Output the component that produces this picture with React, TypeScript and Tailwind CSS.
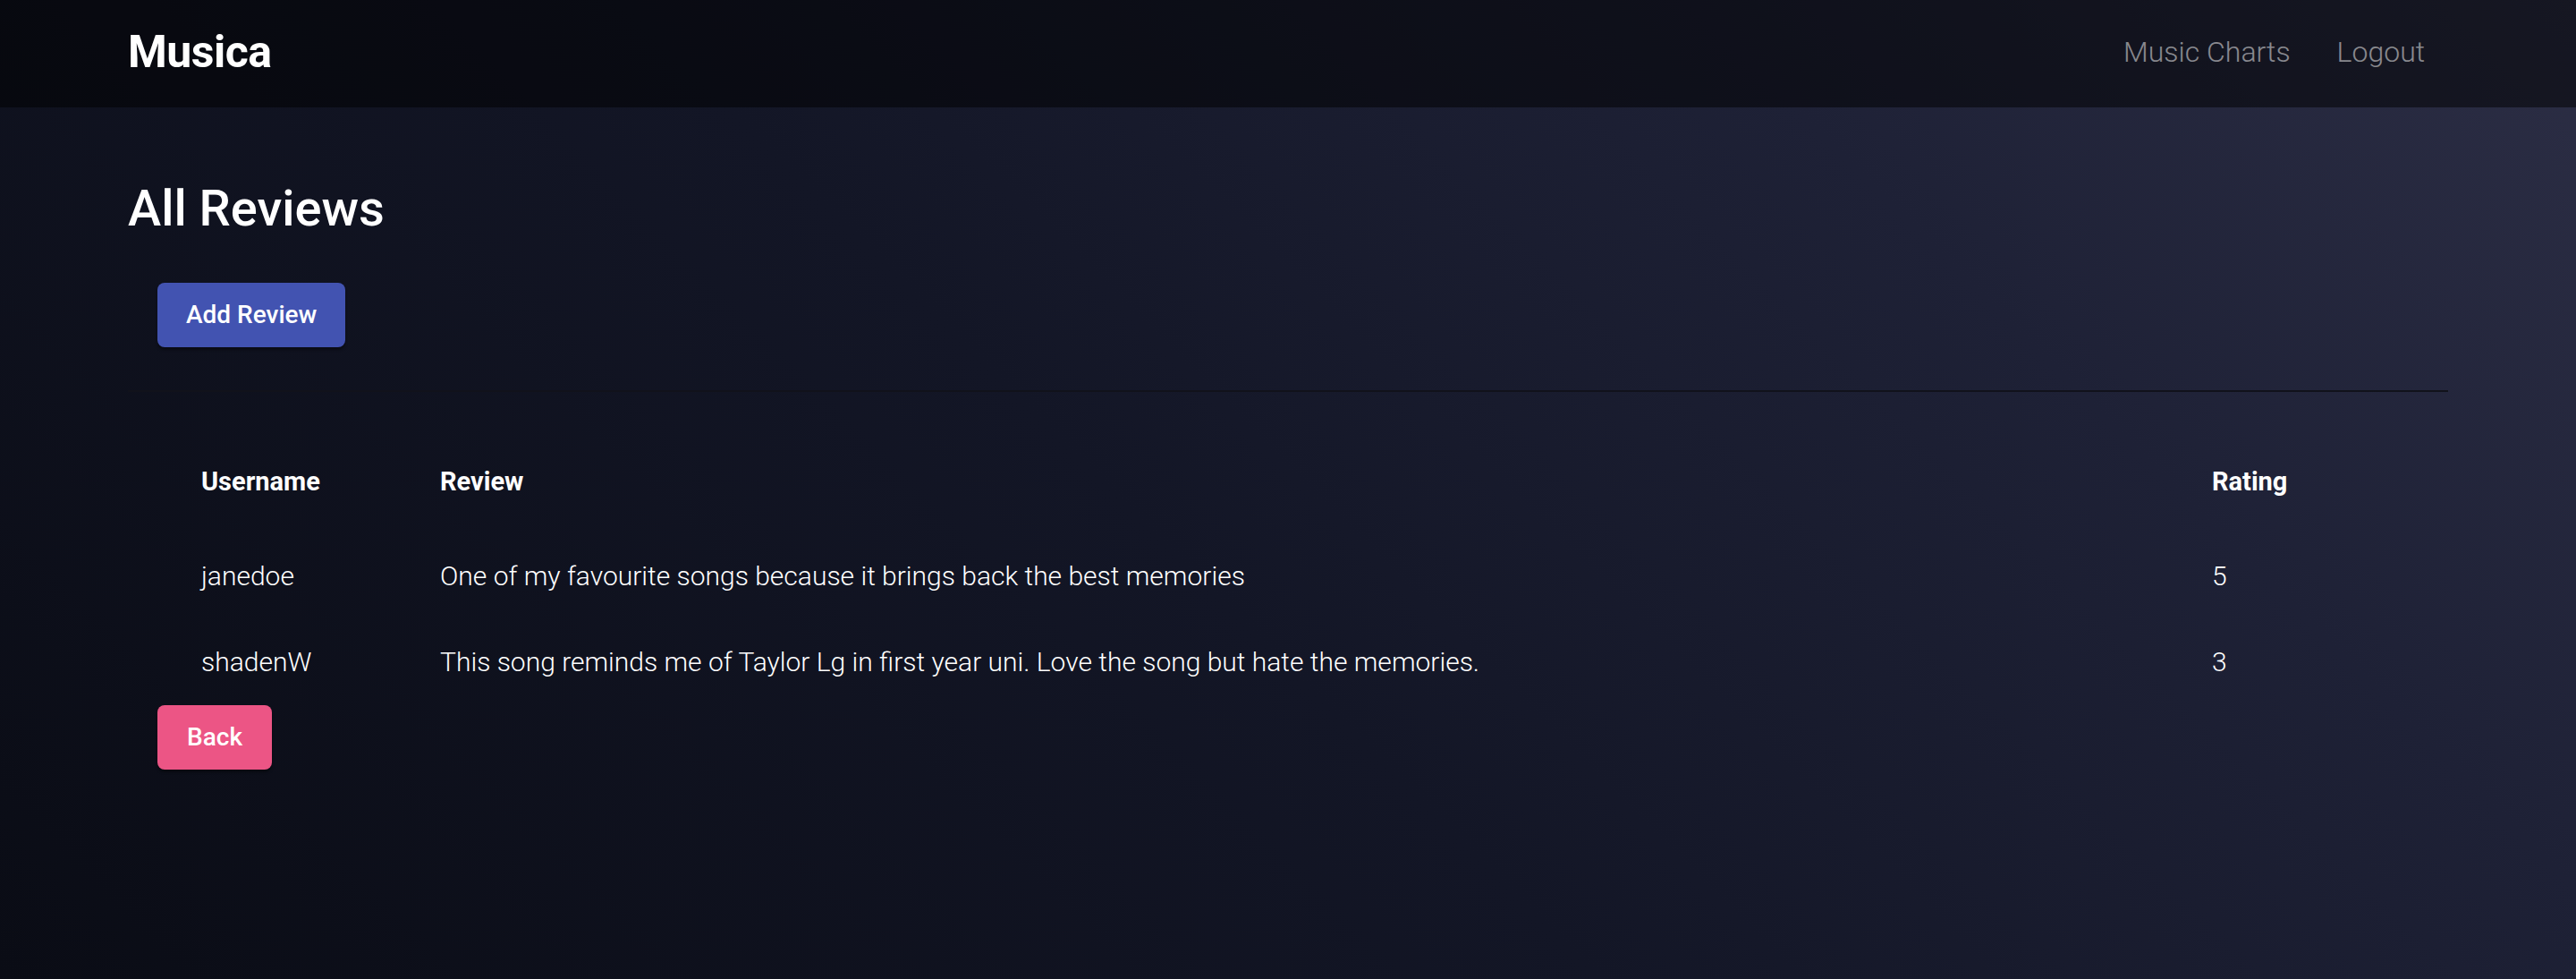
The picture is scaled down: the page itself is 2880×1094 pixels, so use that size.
import React from "react";

const reviews = [
  {
    username: "janedoe",
    review: "One of my favourite songs because it brings back the best memories",
    rating: 5,
  },
  {
    username: "shadenW",
    review:
      "This song reminds me of Taylor Lg in first year uni. Love the song but hate the memories.",
    rating: 3,
  },
];

const font = { fontFamily: "Roboto, 'Open Sans', sans-serif" };

export default function App() {
  return (
    <div
      className="min-h-screen w-full bg-[linear-gradient(45deg,#0a0c15_0%,#131626_45%,#1e2136_75%,#2c2e45_100%)] text-white"
      style={font}
    >
      <header className="flex h-[120px] items-center justify-between bg-black/50 px-[143px]">
        <a href="#" className="pb-[5px] text-[50px] font-bold leading-none tracking-[-0.5px] text-white">
          Musica
        </a>
        <nav className="flex items-center pb-[5px]">
          <a href="#" className="px-[26px] text-[32px] font-light text-white/50">
            Music Charts
          </a>
          <a href="#" className="px-[26px] text-[32px] font-light text-white/50">
            Logout
          </a>
        </nav>
      </header>

      <main className="px-[143px] pt-[80px]">
        <h1 className="text-[56px] font-medium leading-[1.2]">All Reviews</h1>

        <div className="mt-[49px] px-[33px]">
          <button
            type="button"
            className="h-[72px] rounded-[8px] bg-[#4253b1] px-[32px] text-[28px] font-medium text-white shadow-[0_3px_3px_rgba(0,0,0,0.35)]"
          >
            Add Review
          </button>
        </div>

        <div className="mt-[48px] h-[2px] w-full bg-[#11121b]" />

        <div className="mt-[45px] px-[33px]">
          <div className="grid grid-cols-[267px_1981px_1fr] pl-[49px]">
            <div className="flex h-[112px] items-center text-[29px] font-bold">Username</div>
            <div className="flex h-[112px] items-center text-[29px] font-bold">Review</div>
            <div className="flex h-[112px] items-center text-[29px] font-bold">Rating</div>
            {reviews.map((r) => (
              <React.Fragment key={r.username}>
                <div className="flex h-[96px] items-center text-[30px] font-light">{r.username}</div>
                <div className="flex h-[96px] items-center text-[30px] font-light">{r.review}</div>
                <div className="flex h-[96px] items-center text-[30px] font-light">{r.rating}</div>
              </React.Fragment>
            ))}
          </div>
          <button
            type="button"
            className="mt-px h-[72px] rounded-[8px] bg-[#ec5585] px-[33px] text-[28px] font-medium text-white shadow-[0_3px_3px_rgba(0,0,0,0.35)]"
          >
            Back
          </button>
        </div>
      </main>
    </div>
  );
}
